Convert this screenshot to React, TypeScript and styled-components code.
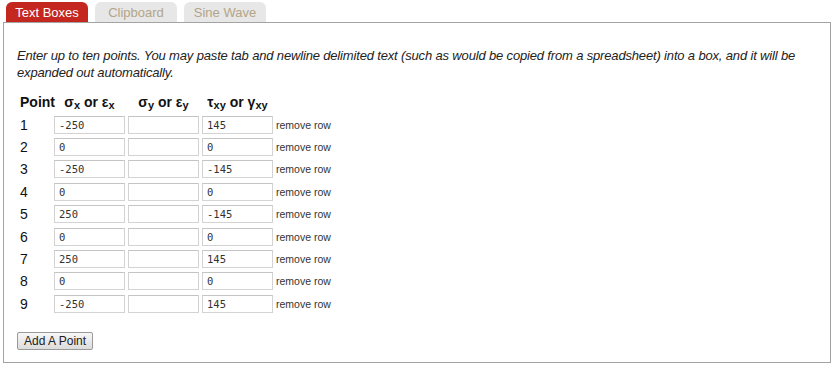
import React from "react";
import styled, { createGlobalStyle } from "styled-components";

const Global = createGlobalStyle`
  html, body { margin: 0; padding: 0; background: #ffffff; }
  body { font-family: "Liberation Sans", Arial, sans-serif; color: #222; }
`;

const Page = styled.div`
  width: 836px;
  height: 368px;
  padding: 2px 0 0 3px;
  box-sizing: border-box;
`;

const TabBar = styled.div`
  display: flex;
  gap: 7px;
  padding-left: 3px;
  height: 20px;
`;

const Tab = styled.div<{ $active?: boolean }>`
  width: 82px;
  height: 20px;
  border-radius: 6px 6px 0 0;
  display: flex;
  align-items: center;
  justify-content: center;
  font-size: 13px;
  background: ${(p) => (p.$active ? "#c3271f" : "#e7e7e7")};
  color: ${(p) => (p.$active ? "#ffffff" : "#b3a587")};
`;

const Panel = styled.div`
  width: 828px;
  height: 341px;
  box-sizing: border-box;
  border: 1px solid #a3a3a3;
  padding: 24px 13px 0 13px;
`;

const Intro = styled.p`
  margin: 0 0 10px 0;
  font-style: italic;
  font-size: 13px;
  letter-spacing: -0.16px;
  line-height: 17px;
  color: #222;
`;

const Grid = styled.div`
  display: grid;
  grid-template-columns: 34px 71px 71px 71px auto;
  column-gap: 3px;
  grid-auto-rows: 22.4px;
  align-items: center;
`;

const Head = styled.div<{ $left?: boolean }>`
  font-weight: bold;
  font-size: 14px;
  text-align: ${(p) => (p.$left ? "left" : "center")};
  padding-left: ${(p) => (p.$left ? "3px" : "0")};
  white-space: nowrap;
  color: #111;
`;

const Sub = styled.sub`
  font-size: 11px;
  vertical-align: -2px;
  line-height: 0;
`;

const Num = styled.div`
  font-size: 14px;
  padding-left: 3px;
  color: #111;
`;

const Field = styled.input`
  width: 71px;
  height: 18px;
  box-sizing: border-box;
  border: 1px solid #d3d3d3;
  border-top-color: #c4c4c4;
  padding: 0 4px;
  font-family: "DejaVu Sans Mono", "Liberation Mono", monospace;
  font-size: 10.5px;
  color: #333;
  background: #fff;
  outline: none;
`;

const Remove = styled.span`
  font-size: 10.5px;
  color: #333;
  white-space: nowrap;
`;

const AddButton = styled.button`
  margin-top: 17px;
  height: 18px;
  padding: 0 6px;
  font-family: "Liberation Sans", Arial, sans-serif;
  font-size: 12px;
  color: #222;
  border: 1px solid #9a9a9a;
  border-radius: 2px;
  background: linear-gradient(#f7f7f7, #dcdcdc);
  display: flex;
  align-items: center;
`;

const rows: [string, string, string][] = [
  ["-250", "", "145"],
  ["0", "", "0"],
  ["-250", "", "-145"],
  ["0", "", "0"],
  ["250", "", "-145"],
  ["0", "", "0"],
  ["250", "", "145"],
  ["0", "", "0"],
  ["-250", "", "145"],
];

export default function App() {
  return (
    <Page>
      <Global />
      <TabBar>
        <Tab $active>Text Boxes</Tab>
        <Tab>Clipboard</Tab>
        <Tab>Sine Wave</Tab>
      </TabBar>
      <Panel>
        <Intro>
          Enter up to ten points. You may paste tab and newline delimited text (such as would be copied from a spreadsheet) into a box, and it will be expanded out automatically.
        </Intro>
        <Grid>
          <Head $left>Point</Head>
          <Head>
            σ<Sub>x</Sub> or ε<Sub>x</Sub>
          </Head>
          <Head>
            σ<Sub>y</Sub> or ε<Sub>y</Sub>
          </Head>
          <Head>
            τ<Sub>xy</Sub> or γ<Sub>xy</Sub>
          </Head>
          <span />
          {rows.map((r, i) => (
            <React.Fragment key={i}>
              <Num>{i + 1}</Num>
              <Field defaultValue={r[0]} />
              <Field defaultValue={r[1]} />
              <Field defaultValue={r[2]} />
              <Remove>remove row</Remove>
            </React.Fragment>
          ))}
        </Grid>
        <AddButton>Add A Point</AddButton>
      </Panel>
    </Page>
  );
}
